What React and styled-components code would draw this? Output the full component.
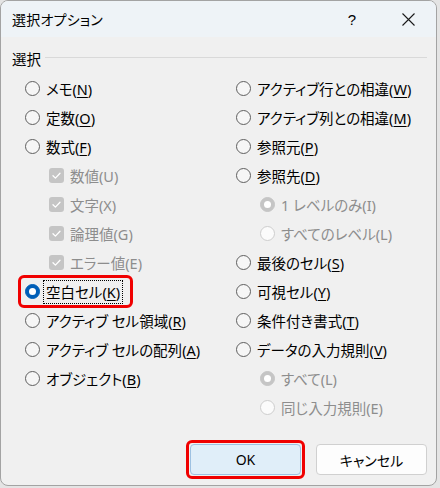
import styled, { createGlobalStyle } from "styled-components";

const GlobalStyle = createGlobalStyle`
  html, body {
    margin: 0;
    padding: 0;
    background: #e4e4e4;
  }
  body {
    font-family: "Noto Sans", "Noto Sans CJK JP", sans-serif;
    font-feature-settings: "palt";
    color: #000;
  }
`;

const Window = styled.div`
  width: 437px;
  height: 486px;
  box-sizing: border-box;
  border: 1px solid #a3a3a3;
  border-radius: 8px;
  background: #f0f0f0;
  overflow: hidden;
  display: flex;
  flex-direction: column;
`;

const TitleBar = styled.div`
  height: 36px;
  flex: none;
  background: #eef3f7;
  display: flex;
  align-items: center;
  padding-left: 11px;
`;

const Title = styled.div`
  flex: 1;
  font-size: 14px;
  letter-spacing: 0.2px;
`;

const Help = styled.div`
  width: 30px;
  text-align: center;
  font-size: 15px;
  font-family: "Liberation Sans", sans-serif;
  margin-right: 26px;
`;

const Close = styled.div`
  width: 30px;
  display: flex;
  justify-content: center;
  margin-right: 13px;
`;

const Body = styled.div`
  flex: 1;
  padding: 11px 9px 0 11px;
  display: flex;
  flex-direction: column;
`;

const GroupHead = styled.div`
  height: 20px;
  display: flex;
  align-items: center;
  gap: 4px;
  font-size: 14.5px;
  margin-bottom: 6px;
`;

const GroupLine = styled.div`
  flex: 1;
  height: 1px;
  background: #d9d9d9;
  margin-top: -1px;
`;

const Columns = styled.div`
  display: grid;
  grid-template-columns: 211px 1fr;
  padding-left: 13px;
`;

const Column = styled.div`
  display: flex;
  flex-direction: column;
`;

const Row = styled.div`
  height: 29px;
  display: flex;
  align-items: center;
  padding-left: ${(p) => (p.indent ? "24px" : "0")};
  font-size: 14.5px;
  color: ${(p) => (p.disabled ? "#8d8d8d" : "#000")};
  white-space: nowrap;
`;

const Item = styled.div`
  position: relative;
  display: flex;
  align-items: center;
  gap: 6px;
  height: 24px;
`;

const Circle = styled.span`
  width: 15px;
  height: 15px;
  box-sizing: border-box;
  border-radius: 50%;
  flex: none;
  display: flex;
  align-items: center;
  justify-content: center;
  border: 1px solid
    ${(p) =>
      p.checked ? (p.disabled ? "#c5c5c5" : "#005fb8") : p.disabled ? "#cdcdcd" : "#5f5f5f"};
  background: ${(p) =>
    p.checked ? (p.disabled ? "#c5c5c5" : "#005fb8") : p.disabled ? "#fbfbfb" : "#f6f6f6"};
  &::after {
    content: "";
    display: ${(p) => (p.checked ? "block" : "none")};
    width: 7px;
    height: 7px;
    border-radius: 50%;
    background: #fff;
  }
`;

const Box = styled.span`
  width: 15px;
  height: 15px;
  border-radius: 3px;
  background: #c5c5c5;
  flex: none;
  display: flex;
  align-items: center;
  justify-content: center;
`;

const Label = styled.span`
  display: inline-flex;
  align-items: center;
  height: 24px;
  padding: 0 ${(p) => (p.focused ? "2px" : "0")};
  margin: 0 ${(p) => (p.focused ? "-3px" : "0")};
  border: ${(p) => (p.focused ? "1px dotted #000" : "none")};
  box-sizing: border-box;
`;

const Key = styled.span`
  text-decoration: underline;
  text-underline-offset: 2px;
  text-decoration-thickness: 1px;
`;

const Highlight = styled.div`
  position: relative;
  display: inline-flex;
  &::after {
    content: "";
    position: absolute;
    top: ${(p) => p.inset[0]}px;
    right: ${(p) => p.inset[1]}px;
    bottom: ${(p) => p.inset[2]}px;
    left: ${(p) => p.inset[3]}px;
    border: 3px solid #f00000;
    border-radius: 6px;
    pointer-events: none;
  }
`;

const Footer = styled.div`
  display: flex;
  justify-content: flex-end;
  gap: 15px;
  margin-top: 22px;
`;

const Button = styled.button`
  width: 111px;
  height: 31px;
  box-sizing: border-box;
  border-radius: 4px;
  border: 1px solid ${(p) => (p.primary ? "#9ec1e2" : "#d0d0d0")};
  background: ${(p) => (p.primary ? "#e0eef9" : "#fdfdfd")};
  font-family: "Noto Sans", "Noto Sans CJK JP", sans-serif;
  font-feature-settings: "palt";
  font-size: 14px;
  color: #000;
  padding: 0;
`;

const CloseIcon = () => (
  <svg width="13" height="13" viewBox="0 0 13 13">
    <path d="M0.5 0.5L12.5 12.5M12.5 0.5L0.5 12.5" stroke="#1a1a1a" strokeWidth="1.1" fill="none" />
  </svg>
);

const CheckIcon = () => (
  <svg width="11" height="11" viewBox="0 0 11 11">
    <path d="M2 5.8L4.4 8.1L9 3.2" stroke="#fff" strokeWidth="1.3" fill="none" strokeLinecap="round" strokeLinejoin="round" />
  </svg>
);

const Text = ({ text, k }) => {
  if (!k) return text;
  const i = text.indexOf("(" + k + ")");
  return (
    <>
      {text.slice(0, i)}(<Key>{k}</Key>){text.slice(i + k.length + 2)}
    </>
  );
};

const Option = ({ type = "radio", text, k, checked, disabled, indent, focused }) => (
  <Row indent={indent} disabled={disabled}>
    <Item>
      {type === "check" ? (
        <Box>
          <CheckIcon />
        </Box>
      ) : (
        <Circle checked={checked} disabled={disabled} />
      )}
      <Label focused={focused}>
        <Text text={text} k={k} />
      </Label>
    </Item>
  </Row>
);

const left = [
  { text: "メモ(N)", k: "N" },
  { text: "定数(O)", k: "O" },
  { text: "数式(F)", k: "F" },
  { type: "check", text: "数値(U)", disabled: true, indent: true },
  { type: "check", text: "文字(X)", disabled: true, indent: true },
  { type: "check", text: "論理値(G)", disabled: true, indent: true },
  { type: "check", text: "エラー値(E)", disabled: true, indent: true },
  { text: "空白セル(K)", k: "K", checked: true, focused: true, mark: true },
  { text: "アクティブ セル領域(R)", k: "R" },
  { text: "アクティブ セルの配列(A)", k: "A" },
  { text: "オブジェクト(B)", k: "B" },
];

const right = [
  { text: "アクティブ行との相違(W)", k: "W" },
  { text: "アクティブ列との相違(M)", k: "M" },
  { text: "参照元(P)", k: "P" },
  { text: "参照先(D)", k: "D" },
  { text: "1 レベルのみ(I)", checked: true, disabled: true, indent: true },
  { text: "すべてのレベル(L)", disabled: true, indent: true },
  { text: "最後のセル(S)", k: "S" },
  { text: "可視セル(Y)", k: "Y" },
  { text: "条件付き書式(T)", k: "T" },
  { text: "データの入力規則(V)", k: "V" },
  { text: "すべて(L)", checked: true, disabled: true, indent: true },
  { text: "同じ入力規則(E)", disabled: true, indent: true },
];

const renderOption = (o) =>
  o.mark ? (
    <Row key={o.text}>
      <Highlight inset={[-2, -13, -2, -7]}>
        <Option {...o} />
      </Highlight>
    </Row>
  ) : (
    <Option key={o.text} {...o} />
  );

export default function App() {
  return (
    <>
      <GlobalStyle />
      <Window>
        <TitleBar>
          <Title>選択オプション</Title>
          <Help>?</Help>
          <Close>
            <CloseIcon />
          </Close>
        </TitleBar>
        <Body>
          <GroupHead>
            選択
            <GroupLine />
          </GroupHead>
          <Columns>
            <Column>{left.map(renderOption)}</Column>
            <Column>{right.map(renderOption)}</Column>
          </Columns>
          <Footer>
            <Highlight inset={[-4, -4, -4, -4]}>
              <Button primary>OK</Button>
            </Highlight>
            <Button>キャンセル</Button>
          </Footer>
        </Body>
      </Window>
    </>
  );
}
